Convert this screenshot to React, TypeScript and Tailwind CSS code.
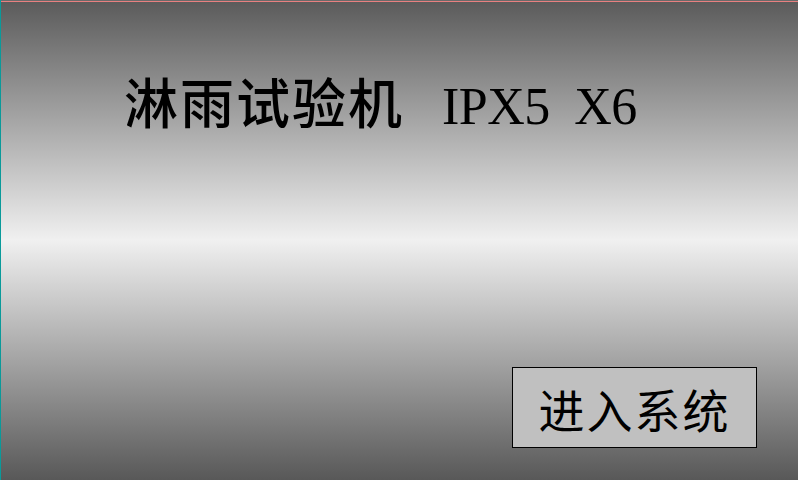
export default function App() {
  return (
    <div className="relative w-[798px] h-[480px] overflow-hidden flex flex-col border-l-[1.5px] border-l-[#0a9a9a] bg-[linear-gradient(to_bottom,#5a5a5a_0%,#f0f0f0_50%,#585858_100%)]">
      <div className="h-px w-full bg-[#6a6a6a]" />
      <div className="h-px w-full bg-[#e88080]" />
      <div className="mt-[70px] pl-[123px] flex items-baseline text-black font-bold text-[54px] leading-[58px] whitespace-nowrap [font-family:'Liberation_Serif','Noto_Sans_CJK_SC',serif]">
        <span className="[font-family:'Noto_Sans_CJK_SC',sans-serif] font-medium tracking-[2px]">淋雨试验机</span>
        <span className="ml-[38px] font-normal text-[52px] tracking-[-0.5px] [word-spacing:12px]">IPX5 X6</span>
      </div>
      <div className="mt-auto mb-[32px] mr-[41px] self-end w-[245px] h-[81px] border border-black bg-[#c0c0c0] flex items-center justify-center">
        <span className="text-[46px] leading-none text-black [font-family:'Noto_Sans_CJK_SC',sans-serif] tracking-[2px]">进入系统</span>
      </div>
    </div>
  );
}
